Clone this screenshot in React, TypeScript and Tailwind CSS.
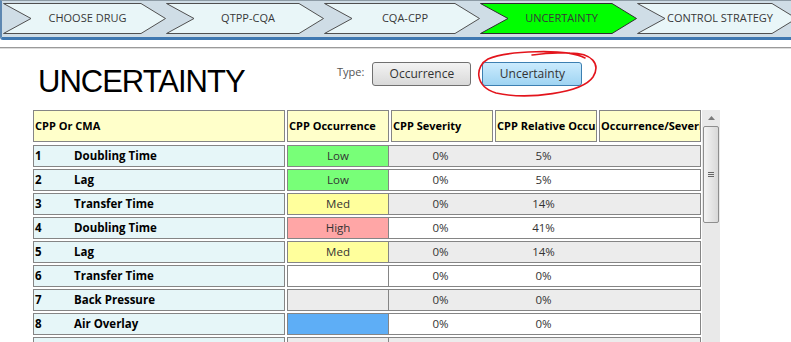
import React from 'react';

type Row = {
  no: number;
  name: string;
  occ: string;
  occBg: string;
  stripe: string;
  sev: string;
  rel: string;
};

const steps = [
  { label: 'CHOOSE DRUG', w: 163, active: false },
  { label: 'QTPP-CQA', w: 158, active: false },
  { label: 'CQA-CPP', w: 156, active: false },
  { label: 'UNCERTAINTY', w: 157, active: true },
  { label: 'CONTROL STRATEGY', w: 160, active: false },
];

const rows: Row[] = [
  { no: 1, name: 'Doubling Time', occ: 'Low', occBg: 'bg-[#78ff78]', stripe: 'bg-[#ececec]', sev: '0%', rel: '5%' },
  { no: 2, name: 'Lag', occ: 'Low', occBg: 'bg-[#78ff78]', stripe: 'bg-white', sev: '0%', rel: '5%' },
  { no: 3, name: 'Transfer Time', occ: 'Med', occBg: 'bg-[#ffff9c]', stripe: 'bg-[#ececec]', sev: '0%', rel: '14%' },
  { no: 4, name: 'Doubling Time', occ: 'High', occBg: 'bg-[#ffa6a6]', stripe: 'bg-white', sev: '0%', rel: '41%' },
  { no: 5, name: 'Lag', occ: 'Med', occBg: 'bg-[#ffff9c]', stripe: 'bg-[#ececec]', sev: '0%', rel: '14%' },
  { no: 6, name: 'Transfer Time', occ: '', occBg: 'bg-white', stripe: 'bg-white', sev: '0%', rel: '0%' },
  { no: 7, name: 'Back Pressure', occ: '', occBg: 'bg-[#ececec]', stripe: 'bg-[#ececec]', sev: '0%', rel: '0%' },
  { no: 8, name: 'Air Overlay', occ: '', occBg: 'bg-[#5eaef6]', stripe: 'bg-white', sev: '0%', rel: '0%' },
];

const headers = ['CPP Occurrence', 'CPP Severity', 'CPP Relative Occurrence', 'Occurrence/Severity'];

function Chevron({ label, w, active }: { label: string; w: number; active: boolean }) {
  const pts = `0.5,0.5 ${w - 25},0.5 ${w - 0.5},15.5 ${w - 25},30.5 0.5,30.5 28,15.5`;
  return (
    <div className="relative h-[31px] shrink-0 flex items-center justify-center pl-[6px]" style={{ width: w }}>
      <svg className="absolute inset-0" width={w} height={31}>
        <polygon points={pts} fill={active ? '#00ff00' : '#e9f6f8'} stroke={active ? '#2e2e2e' : '#505050'} strokeWidth="1" />
      </svg>
      <span className="relative text-[11px] text-[#383838] whitespace-nowrap">{label}</span>
    </div>
  );
}

export default function App() {
  return (
    <div className="relative w-[791px] h-[342px] overflow-hidden bg-white font-['Open_Sans',sans-serif]">
      {/* Step bar */}
      <div className="h-[40px] bg-[#cfdde6] border-t border-[#8d9ba5] border-l-2 border-l-[#5d87b1] border-b-[3px] border-b-[#3f78b1] rounded-bl-[3px] flex pt-[2px] pl-[1px] overflow-hidden">
        {steps.map((s) => (
          <Chevron key={s.label} {...s} />
        ))}
      </div>
      <div className="h-[7px]" />
      <div className="h-px bg-[#9a9a9a]" />
      <div className="h-px bg-[#dcdcdc]" />

      {/* Title row */}
      <div className="h-[61px] flex items-start">
        <div className="w-[337px] shrink-0 pl-[38px] pt-[17px]">
          <h1 className="font-['Liberation_Sans',Arial,sans-serif] text-[31px] leading-none tracking-[-1px] text-black">UNCERTAINTY</h1>
        </div>
        <div className="flex items-start pt-[13px]">
          <span className="text-[11px] text-[#555] leading-[24px] -mt-[2px]">Type:</span>
          <button className="ml-[8px] w-[99px] h-[24px] rounded-[3px] border border-[#707070] bg-gradient-to-b from-[#f3f3f3] to-[#d9d9d9] text-[12px] text-[#333]">
            Occurrence
          </button>
          <button className="ml-[11px] w-[100px] h-[24px] rounded-[3px] border border-[#3c7fb1] bg-gradient-to-b from-[#cbebfd] to-[#9fd4f2] text-[12px] text-[#333]">
            Uncertainty
          </button>
        </div>
      </div>

      {/* Table */}
      <div className="flex pl-[33px]">
        <div className="w-[668px] flex flex-col gap-[2px] text-[11.5px]">
          <div className="flex gap-[2px] h-[32px] mb-[1px] text-[11px]">
            <div className="w-[252px] border border-[#858585] bg-[#ffffca] font-bold text-black flex items-center pl-[1px]">CPP Or CMA</div>
            {headers.map((h) => (
              <div key={h} className="w-[102px] border border-[#858585] bg-[#ffffca] font-bold text-black flex items-center pl-[1px] overflow-hidden whitespace-nowrap">
                {h}
              </div>
            ))}
          </div>
          {rows.map((r) => (
            <div key={r.no} className="flex gap-[2px] h-[22px]">
              <div className="w-[252px] border border-[#858585] bg-[#e6f6f8] font-bold text-black flex items-center">
                <span className="w-[40px] pl-[1px]">{r.no}</span>
                <span>{r.name}</span>
              </div>
              <div className={`w-[414px] border border-[#858585] flex ${r.stripe}`}>
                <div className={`w-[101px] border-r border-[#858585] flex items-center justify-center text-[#333] ${r.occBg}`}>{r.occ}</div>
                <div className="w-[103px] flex items-center justify-center text-[#333]">{r.sev}</div>
                <div className="w-[103px] flex items-center justify-center text-[#333]">{r.rel}</div>
              </div>
            </div>
          ))}
          {/* partially visible 9th row */}
          <div className="flex gap-[2px] h-[22px]">
            <div className="w-[252px] border border-[#858585] bg-[#e6f6f8]" />
            <div className="w-[414px] border border-[#858585] flex bg-[#ececec]">
              <div className="w-[101px] border-r border-[#858585]" />
            </div>
          </div>
        </div>

        {/* Scrollbar */}
        <div className="ml-[1px] w-[18px] h-[240px] bg-[#e9e9e9] flex flex-col items-center">
          <div className="h-[16px] flex items-center justify-center">
            <svg width="7" height="4"><polygon points="0,4 3.5,0 7,4" fill="#7a7a7a" /></svg>
          </div>
          <div className="w-[16px] h-[97px] rounded-[2px] border border-[#8e8e8e] bg-gradient-to-r from-[#f4f4f4] to-[#d8d8d8] flex flex-col items-center justify-center gap-[1px]">
            <div className="w-[6px] h-px bg-[#666]" />
            <div className="w-[6px] h-px bg-[#666]" />
            <div className="w-[6px] h-px bg-[#666]" />
          </div>
        </div>
      </div>

      {/* Red hand-drawn annotation */}
      <svg className="absolute left-0 top-0 pointer-events-none" width="791" height="342">
        <path
          d="M 585 58 C 566 48, 506 51, 488 59 C 475 66, 474 86, 496 93 C 528 100, 582 93, 593 77 C 601 64, 592 53, 570 53 C 556 52, 543 54, 532 55"
          fill="none"
          stroke="#e3141c"
          strokeWidth="1.6"
          strokeLinecap="round"
        />
      </svg>
    </div>
  );
}
